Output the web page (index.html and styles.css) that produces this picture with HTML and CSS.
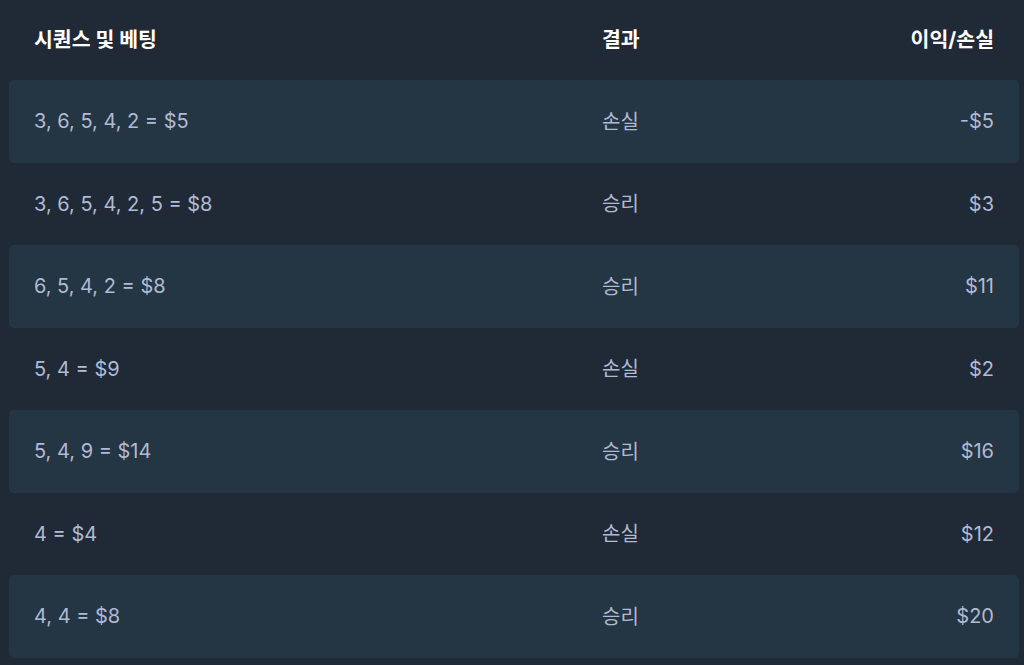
FILE: index.html
```html
<!DOCTYPE html>
<html lang="ko">
<head>
<meta charset="utf-8">
<link rel="stylesheet" href="styles.css">
</head>
<body>
<div class="table">
  <div class="row head">
    <div>시퀀스 및 베팅</div>
    <div>결과</div>
    <div class="num">이익/손실</div>
  </div>
  <div class="row alt"><div>3, 6, 5, 4, 2 = $5</div><div class="ko">손실</div><div class="num">-$5</div></div>
  <div class="row"><div>3, 6, 5, 4, 2, 5 = $8</div><div class="ko">승리</div><div class="num">$3</div></div>
  <div class="row alt"><div>6, 5, 4, 2 = $8</div><div class="ko">승리</div><div class="num">$11</div></div>
  <div class="row"><div>5, 4 = $9</div><div class="ko">손실</div><div class="num">$2</div></div>
  <div class="row alt"><div>5, 4, 9 = $14</div><div class="ko">승리</div><div class="num">$16</div></div>
  <div class="row"><div>4 = $4</div><div class="ko">손실</div><div class="num">$12</div></div>
  <div class="row alt"><div>4, 4 = $8</div><div class="ko">승리</div><div class="num">$20</div></div>
</div>
</body>
</html>
```
FILE: styles.css
```css
html, body {
  margin: 0;
  padding: 0;
  background: #1f2a36;
  height: 100%;
  overflow: hidden;
}
body {
  font-family: "Inter", "Noto Sans CJK KR", sans-serif;
  color: #b1bad3;
  font-size: 20px;
}
.table {
  padding: 0 5px 0 9px;
  display: flex;
  flex-direction: column;
}
.row {
  display: grid;
  grid-template-columns: 568px 1fr 1fr;
  align-items: center;
  height: 82.5px;
  padding: 0 25px;
  border-radius: 5px;
}
.row.head {
  height: 80px;
  color: #ffffff;
  font-weight: 700;
  font-size: 20.5px;
  padding-bottom: 4px;
  box-sizing: border-box;
}
.row.alt {
  background: #243543;
}
.ko {
  font-size: 20px;
  padding-bottom: 2px;
}
.num {
  text-align: right;
}
```
